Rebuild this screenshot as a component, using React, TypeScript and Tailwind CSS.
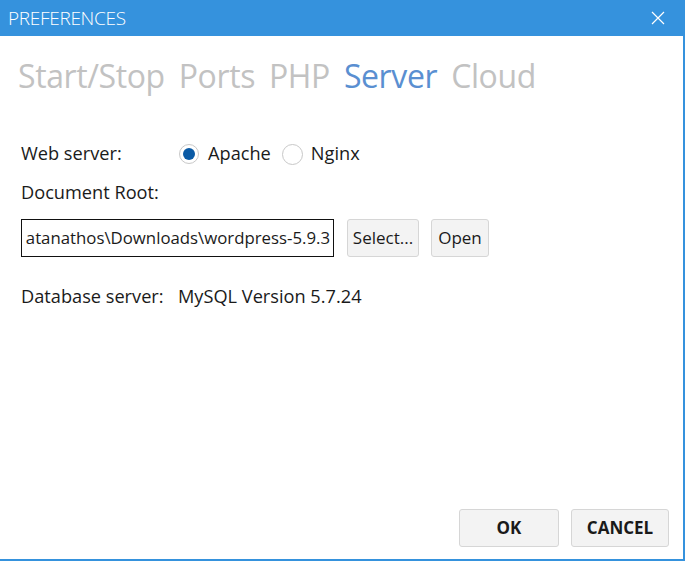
import React from "react";

export default function App() {
  const font = { fontFamily: '"Open Sans", "Noto Sans", sans-serif' };
  return (
    <div className="w-[685px] h-[561px] bg-white flex flex-col overflow-hidden" style={font}>
      <div className="h-[36px] bg-[#3592dd] flex items-center justify-between pl-[8px] pr-[20px] shrink-0">
        <span className="text-white text-[19px] font-light tracking-[-0.3px]">PREFERENCES</span>
        <svg width="14" height="14" viewBox="0 0 14 14">
          <path d="M1 1 L13 13 M13 1 L1 13" stroke="#ffffff" strokeWidth="1.2" />
        </svg>
      </div>
      <div className="flex-1 flex flex-col border-r-2 border-b-2 border-[#3592dd]">
        <div className="flex gap-[14px] pl-[18px] pt-[16px] text-[32px] leading-[48px] text-[#c2c2c2] tracking-[-0.4px]">
          <span>Start/Stop</span>
          <span>Ports</span>
          <span>PHP</span>
          <span className="text-[#5a8fd1]">Server</span>
          <span>Cloud</span>
        </div>
        <div className="pl-[21px] pt-[37px] text-[18.2px] text-[#1a1a1a]">
          <div className="flex items-center h-[34px]">
            <span className="w-[158px]">Web server:</span>
            <span className="w-[20px] h-[20px] rounded-full border border-[#c8c8c8] flex items-center justify-center">
              <span className="w-[12px] h-[12px] rounded-full bg-[#0a5aa5]" />
            </span>
            <span className="ml-[9px]">Apache</span>
            <span className="ml-[11px] w-[21px] h-[21px] rounded-full border border-[#c8c8c8]" />
            <span className="ml-[8px]">Nginx</span>
          </div>
          <div className="h-[44px] flex items-center">Document Root:</div>
          <div className="flex items-center mt-[4px]">
            <div className="w-[313px] h-[38px] border border-[#111] flex items-center justify-end pr-[3px] overflow-hidden whitespace-nowrap text-[16.8px]">
              atanathos\Downloads\wordpress-5.9.3
            </div>
            <button className="ml-[13px] w-[72px] h-[38px] bg-[#f3f3f3] border border-[#d6d6d6] rounded-[3px] text-[17px]">Select...</button>
            <button className="ml-[12px] w-[58px] h-[38px] bg-[#f3f3f3] border border-[#d6d6d6] rounded-[3px] text-[17px]">Open</button>
          </div>
          <div className="flex items-center mt-[20px] h-[40px]">
            <span className="w-[157px]">Database server:</span>
            <span>MySQL Version 5.7.24</span>
          </div>
        </div>
        <div className="flex-1" />
        <div className="flex justify-end gap-[12px] pr-[14px] pb-[12px]">
          <button className="w-[100px] h-[38px] bg-[#f3f3f3] border border-[#d6d6d6] rounded-[3px] font-bold text-[17px] text-[#1a1a1a]">OK</button>
          <button className="w-[98px] h-[38px] bg-[#f3f3f3] border border-[#d6d6d6] rounded-[3px] font-bold text-[17px] text-[#1a1a1a]">CANCEL</button>
        </div>
      </div>
    </div>
  );
}
